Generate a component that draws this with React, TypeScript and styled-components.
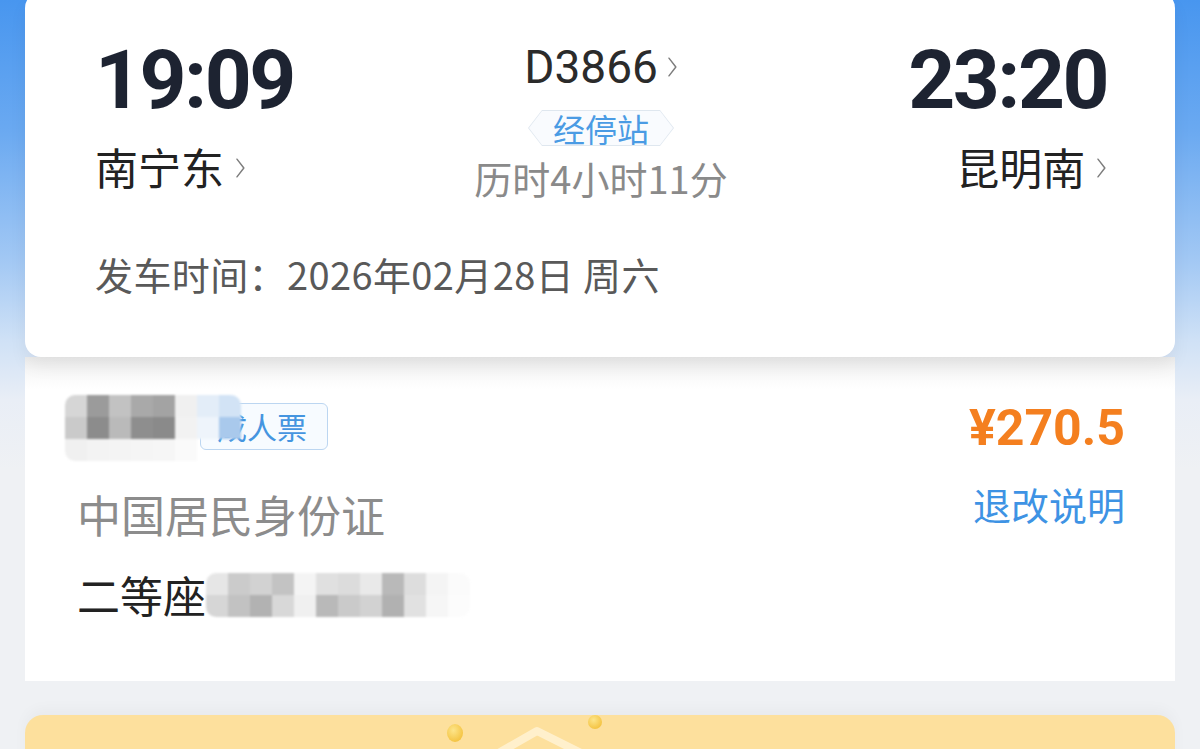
import styled, { createGlobalStyle } from "styled-components";

const GlobalStyle = createGlobalStyle`
  html, body {
    margin: 0;
    padding: 0;
    background: #eff1f4;
  }
  body {
    font-family: "Noto Sans CJK SC", "Noto Sans", sans-serif;
  }
`;

const CJK = `"Noto Sans CJK SC", "Noto Sans", sans-serif`;
const NUM = `Roboto, "Noto Sans CJK SC", sans-serif`;

const nameCells = [
  ["#d6d6d6", "#9b9b9b", "#c2c2c2", "#a9a9a9", "#a3a3a3", "#f0f0f0", "#e3edf8", "#d2e3f5"],
  ["#cacaca", "#8c8c8c", "#bababa", "#8e8e8e", "#8a8a8a", "#f2f2f2", "#eef4fb", "#a9c9ec"],
  ["#f0f0f0", "#f3f3f3", "#f4f4f4", "#f5f5f5", "#f6f6f6", "#fafafa", "transparent", "transparent"],
];

const seatCells = [
  ["#e6e6e6", "#cbcbcb", "#d2d2d2", "#c3c3c3", "#f4f4f4", "#e0e0e0", "#dcdcdc", "#e9e9e9", "#b9b9b9", "#dddddd", "#f4f4f4", "#fbfbfb"],
  ["#d6d6d6", "#c2c2c2", "#b2b2b2", "#d8d8d8", "#f0f0f0", "#b9b9b9", "#cacaca", "#d2d2d2", "#b1b1b1", "#e1e1e1", "#f6f6f6", "#fcfcfc"],
];

const Chevron = ({ size = 24 }: { size?: number }) => (
  <svg width={size * 0.45} height={size} viewBox="0 0 11 24">
    <polyline points="2,3 9,12 2,21" fill="none" stroke="#7d7d7d" strokeWidth="1.5" strokeLinecap="round" strokeLinejoin="round" />
  </svg>
);

const Mosaic = ({ cells, size }: { cells: string[][]; size: number }) => (
  <MosaicGrid $cols={cells[0].length} $size={size}>
    {cells.flat().map((c, i) => (
      <span key={i} style={{ background: c }} />
    ))}
  </MosaicGrid>
);

export default function App() {
  return (
    <>
      <GlobalStyle />
      <Page>
        <TripCard>
          <TripRow>
            <Side>
              <Time>19:09</Time>
              <Station>
                南宁东
                <Chevron />
              </Station>
            </Side>
            <Middle>
              <TrainNo>
                D3866
                <Chevron />
              </TrainNo>
              <StopTag>
                <StopTagInner>经停站</StopTagInner>
              </StopTag>
              <Duration>历时4小时11分</Duration>
            </Middle>
            <Side $right>
              <Time>23:20</Time>
              <Station>
                昆明南
                <Chevron />
              </Station>
            </Side>
          </TripRow>
          <DepartDate>发车时间：2026年02月28日 周六</DepartDate>
        </TripCard>

        <PassengerCard>
          <PassengerInfo>
            <NameRow>
              <NameBlur>
                <Mosaic cells={nameCells} size={22} />
              </NameBlur>
              <TicketTag>成人票</TicketTag>
            </NameRow>
            <IdType>中国居民身份证</IdType>
            <SeatRow>
              二等座
              <SeatBlur>
                <Mosaic cells={seatCells} size={22} />
              </SeatBlur>
            </SeatRow>
          </PassengerInfo>
          <PriceCol>
            <Price>¥270.5</Price>
            <RefundLink>退改说明</RefundLink>
          </PriceCol>
        </PassengerCard>

        <PromoCard>
          <svg width="1150" height="40" viewBox="0 0 1150 40">
            <defs>
              <radialGradient id="drop" cx="40%" cy="35%" r="65%">
                <stop offset="0%" stopColor="#fde58a" />
                <stop offset="100%" stopColor="#f4c443" />
              </radialGradient>
            </defs>
            <ellipse cx="430" cy="18" rx="8" ry="9" fill="url(#drop)" />
            <ellipse cx="570" cy="7" rx="7" ry="7" fill="url(#drop)" />
            <path d="M470 40 L512 16 L560 40" fill="none" stroke="#fff0cc" strokeWidth="8" strokeLinejoin="round" />
          </svg>
        </PromoCard>
      </Page>
    </>
  );
}

const Page = styled.div`
  width: 1200px;
  height: 749px;
  overflow: hidden;
  box-sizing: border-box;
  padding: 0 25px;
  display: flex;
  flex-direction: column;
  background: linear-gradient(
    180deg,
    #4896ef 0px,
    #6aa9f1 130px,
    #a2c8f4 260px,
    #cfe1f6 340px,
    #e9eef6 400px,
    #eff1f4 470px
  );
`;

const TripCard = styled.div`
  position: relative;
  z-index: 1;
  flex-shrink: 0;
  margin-top: -8px;
  height: 365px;
  box-sizing: border-box;
  padding: 47px 68px 0 70px;
  background: #fff;
  border-radius: 16px;
  box-shadow: 0 10px 18px rgba(0, 0, 0, 0.05);
  display: flex;
  flex-direction: column;
`;

const TripRow = styled.div`
  display: flex;
  justify-content: space-between;
  align-items: flex-start;
`;

const Side = styled.div<{ $right?: boolean }>`
  display: flex;
  flex-direction: column;
  align-items: ${(p) => (p.$right ? "flex-end" : "flex-start")};
`;

const Time = styled.div`
  font-family: ${NUM};
  font-weight: 700;
  font-size: 82px;
  line-height: 82px;
  letter-spacing: -2.5px;
  color: #1d2331;
`;

const Station = styled.div`
  margin-top: 24px;
  display: flex;
  align-items: center;
  gap: 11px;
  font-family: ${CJK};
  font-size: 43px;
  line-height: 43px;
  color: #222;
  svg {
    margin-top: 2px;
  }
`;

const Middle = styled.div`
  padding-top: 5px;
  display: flex;
  flex-direction: column;
  align-items: center;
`;

const TrainNo = styled.div`
  display: flex;
  align-items: center;
  gap: 9px;
  font-family: ${NUM};
  font-size: 46px;
  line-height: 46px;
  color: #2b2b2b;
`;

const StopTag = styled.div`
  margin-top: 20px;
  padding: 1px;
  background: #dfe7ef;
  clip-path: polygon(14px 0, calc(100% - 14px) 0, 100% 50%, calc(100% - 14px) 100%, 14px 100%, 0 50%);
`;

const StopTagInner = styled.div`
  padding: 0 24px;
  height: 34px;
  display: flex;
  align-items: center;
  font-family: ${CJK};
  font-size: 32px;
  color: #4a9be4;
  background: #f9fbfe;
  clip-path: polygon(13px 0, calc(100% - 13px) 0, 100% 50%, calc(100% - 13px) 100%, 13px 100%, 0 50%);
`;

const Duration = styled.div`
  margin-top: 12px;
  font-family: ${CJK};
  font-size: 38px;
  line-height: 40px;
  color: #8a8a8a;
`;

const DepartDate = styled.div`
  margin-top: 56px;
  font-family: ${CJK};
  font-size: 38px;
  line-height: 40px;
  letter-spacing: 0.4px;
  color: #595959;
`;

const PassengerCard = styled.div`
  flex-shrink: 0;
  height: 324px;
  box-sizing: border-box;
  padding: 44px 50px 0 52px;
  background: linear-gradient(180deg, #ececec 0px, #f7f7f7 14px, #fff 32px);
  display: flex;
  justify-content: space-between;
  align-items: flex-start;
`;

const PassengerInfo = styled.div`
  display: flex;
  flex-direction: column;
`;

const NameRow = styled.div`
  display: flex;
  align-items: center;
  height: 50px;
`;

const NameBlur = styled.div`
  position: relative;
  width: 123px;
  height: 50px;
  > div {
    position: absolute;
    left: -12px;
    top: -6px;
  }
`;

const MosaicGrid = styled.div<{ $cols: number; $size: number }>`
  display: grid;
  grid-template-columns: repeat(${(p) => p.$cols}, ${(p) => p.$size}px);
  grid-auto-rows: ${(p) => p.$size}px;
  filter: blur(1.2px);
  border-radius: 10px;
  overflow: hidden;
`;

const TicketTag = styled.div`
  height: 47px;
  box-sizing: border-box;
  padding: 0 20px 0 16px;
  display: flex;
  align-items: center;
  border: 1.5px solid #bcd6f1;
  border-radius: 6px;
  background: #f7fbff;
  font-family: ${CJK};
  font-size: 30px;
  color: #4595e0;
`;

const IdType = styled.div`
  margin-top: 41px;
  font-family: ${CJK};
  font-size: 44px;
  line-height: 44px;
  color: #8c8c8c;
`;

const SeatRow = styled.div`
  margin-top: 35px;
  display: flex;
  align-items: center;
  font-family: ${CJK};
  font-size: 43px;
  line-height: 43px;
  color: #222;
`;

const SeatBlur = styled.div`
  margin-top: 2px;
`;

const PriceCol = styled.div`
  display: flex;
  flex-direction: column;
  align-items: flex-end;
`;

const Price = styled.div`
  margin-top: 2px;
  font-family: ${NUM};
  font-weight: 700;
  font-size: 50px;
  line-height: 50px;
  color: #f47f1f;
`;

const RefundLink = styled.div`
  margin-top: 31px;
  font-family: ${CJK};
  font-size: 38px;
  line-height: 40px;
  color: #3e93e4;
`;

const PromoCard = styled.div`
  flex-shrink: 0;
  margin-top: 34px;
  height: 60px;
  background: #fde09d;
  border-radius: 18px 18px 0 0;
  box-shadow: 0 -6px 14px rgba(0, 0, 0, 0.03);
  overflow: hidden;
  svg {
    display: block;
  }
`;
